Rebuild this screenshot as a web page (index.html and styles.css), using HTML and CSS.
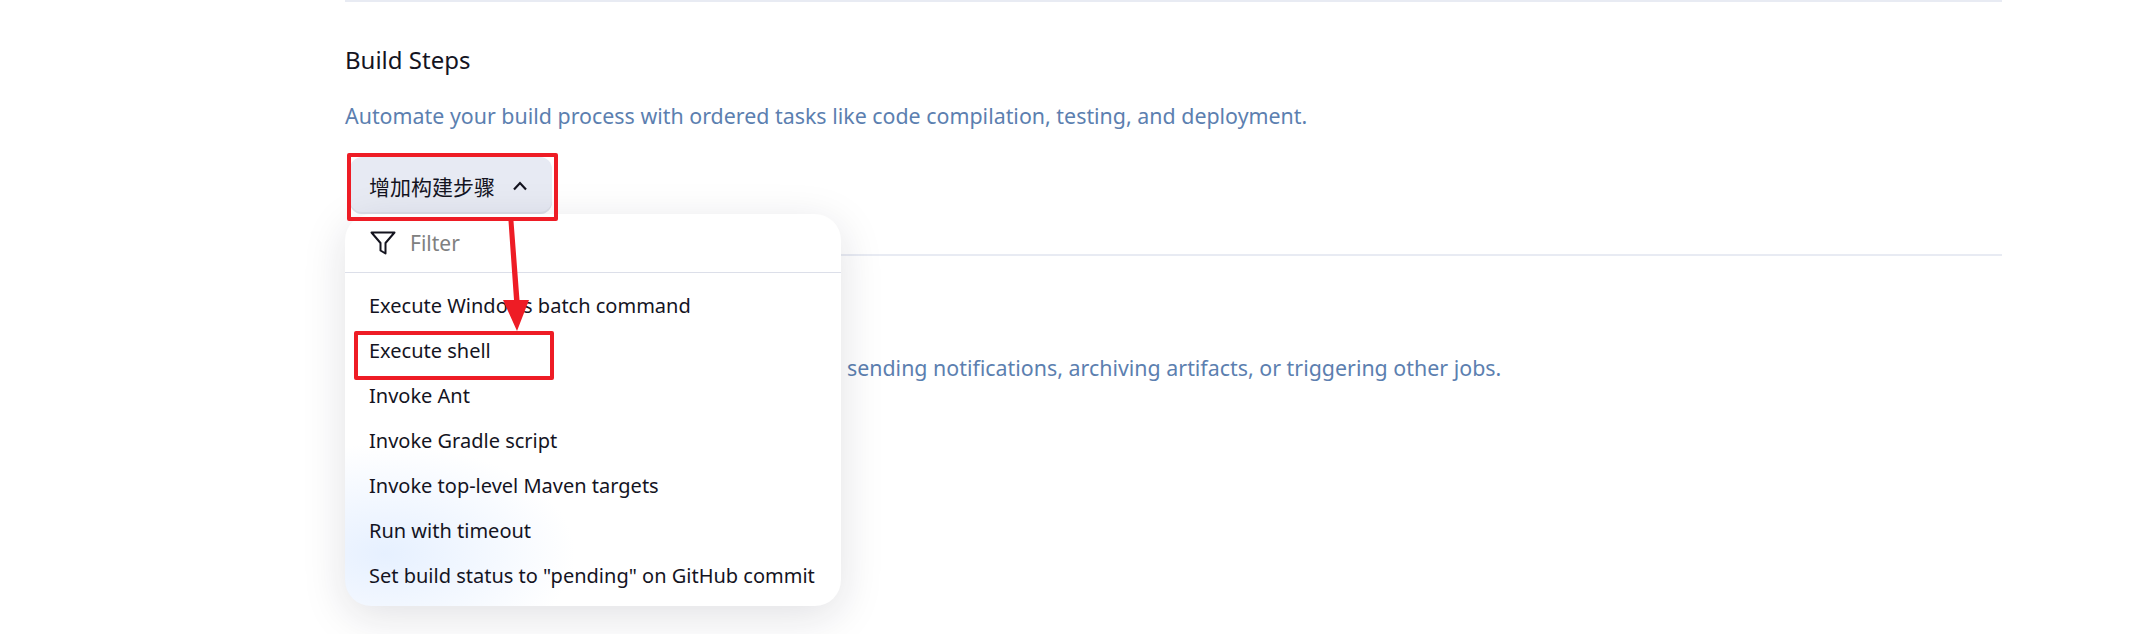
FILE: index.html
```html
<!DOCTYPE html>
<html lang="en">
  <head>
    <meta charset="UTF-8" />
    <meta name="viewport" content="width=device-width, initial-scale=1.0" />
    <title>Build Steps</title>
    <link rel="stylesheet" href="styles.css">
  </head>
  <body>
    <div class="page">
      <section class="section">
        <h2 class="section-title">Build Steps</h2>
        <p class="section-desc">Automate your build process with ordered tasks like code compilation, testing, and deployment.</p>
        <div class="dropdown">
          <button class="add-step">
            <span>增加构建步骤</span>
            <svg class="chevron" viewBox="0 0 16 10" width="16" height="10">
              <path d="M2 8.500 8 2l6 6.500" />
            </svg>
          </button>
          <div class="menu">
            <div class="menu-filter">
              <svg class="filter-icon" viewBox="0 0 26 24" width="26" height="24">
                <path d="M1.500 1.500h23l-9 10.500v10.500l-5-3v-7.500z" />
              </svg>
              <span>Filter</span>
            </div>
            <ul class="menu-list">
              <li>Execute Windows batch command</li>
              <li>Execute shell</li>
              <li>Invoke Ant</li>
              <li>Invoke Gradle script</li>
              <li>Invoke top-level Maven targets</li>
              <li>Run with timeout</li>
              <li>Set build status to "pending" on GitHub commit</li>
            </ul>
          </div>
        </div>
      </section>
      <section class="section section-post">
        <h2 class="section-title">Post-build Actions</h2>
        <p class="section-desc">Define what happens after a build completes, like sending notifications, archiving artifacts, or triggering other jobs.</p>
      </section>
    </div>

    <!-- red annotations drawn on top of the screenshot -->
    <div class="mark mark-button"></div>
    <div class="mark mark-shell"></div>
    <svg class="arrow" viewBox="0 0 2131 634" width="2131" height="634">
      <path d="M508.500 221h5l6 79h9.500l-12 31-14-31h11z" />
    </svg>
  </body>
</html>
```

FILE: styles.css
```css
body {
  margin: 0;
  background: white;
  font-family: "Noto Sans", "Noto Sans CJK SC", sans-serif;
  color: #14141f;
}

.page {
  margin-left: 345px;
  width: 1657px;
  height: 634px;
}

.section {
  border-top: 2px solid #e8ebf3;
  padding-top: 40px;
  height: 212px;
}

.section-title {
  margin: 0;
  font-size: 24px;
  font-weight: 400;
  line-height: 36px;
}

.section-desc {
  margin: 20px 0 0;
  font-size: 21.4px;
  line-height: 36px;
  color: #5c7fb0;
}

.section-post .section-title {
  margin-top: -2px;
}

.dropdown {
  position: relative;
  margin-top: 23px;
}

.add-step {
  display: flex;
  align-items: center;
  gap: 17px;
  margin-left: 5px;
  width: 202px;
  height: 57px;
  padding: 0 0 0 19px;
  border: none;
  border-radius: 12px;
  background: #e7eaf3;
  box-shadow: inset 0 -2px 0 #dcdfe8;
  font-family: inherit;
  font-size: 21px;
  color: #14141f;
}

.chevron path {
  fill: none;
  stroke: #14141f;
  stroke-width: 2.2;
}

.menu {
  position: absolute;
  top: 57px;
  left: 0;
  z-index: 1;
  width: 496px;
  height: 392px;
  border-radius: 26px;
  background:
    radial-gradient(ellipse 190px 110px at 40px 340px, #e6f0ff, rgba(230, 240, 255, 0) 100%),
    white;
  box-shadow: 0 10px 44px rgba(20, 20, 50, 0.13);
  overflow: hidden;
}

.menu-filter {
  display: flex;
  align-items: center;
  gap: 14px;
  height: 58px;
  padding-left: 25px;
  border-bottom: 1px solid #dcdfe9;
  font-size: 21px;
  color: #808080;
}

.filter-icon path {
  fill: none;
  stroke: #14141f;
  stroke-width: 2;
  stroke-linejoin: round;
}

.menu-list {
  list-style: none;
  margin: 0;
  padding: 10px 0 0 24px;
}

.menu-list li {
  height: 45px;
  line-height: 45px;
  font-size: 20px;
  white-space: nowrap;
}

.mark {
  position: absolute;
  z-index: 2;
  border: 4px solid #ee1c25;
  box-sizing: border-box;
  border-radius: 2px;
}

.mark-button {
  left: 347px;
  top: 153px;
  width: 211px;
  height: 68px;
}

.mark-shell {
  left: 354px;
  top: 331px;
  width: 200px;
  height: 49px;
}

.arrow {
  position: absolute;
  left: 0;
  top: 0;
  z-index: 2;
  fill: #ee1c25;
}
```
